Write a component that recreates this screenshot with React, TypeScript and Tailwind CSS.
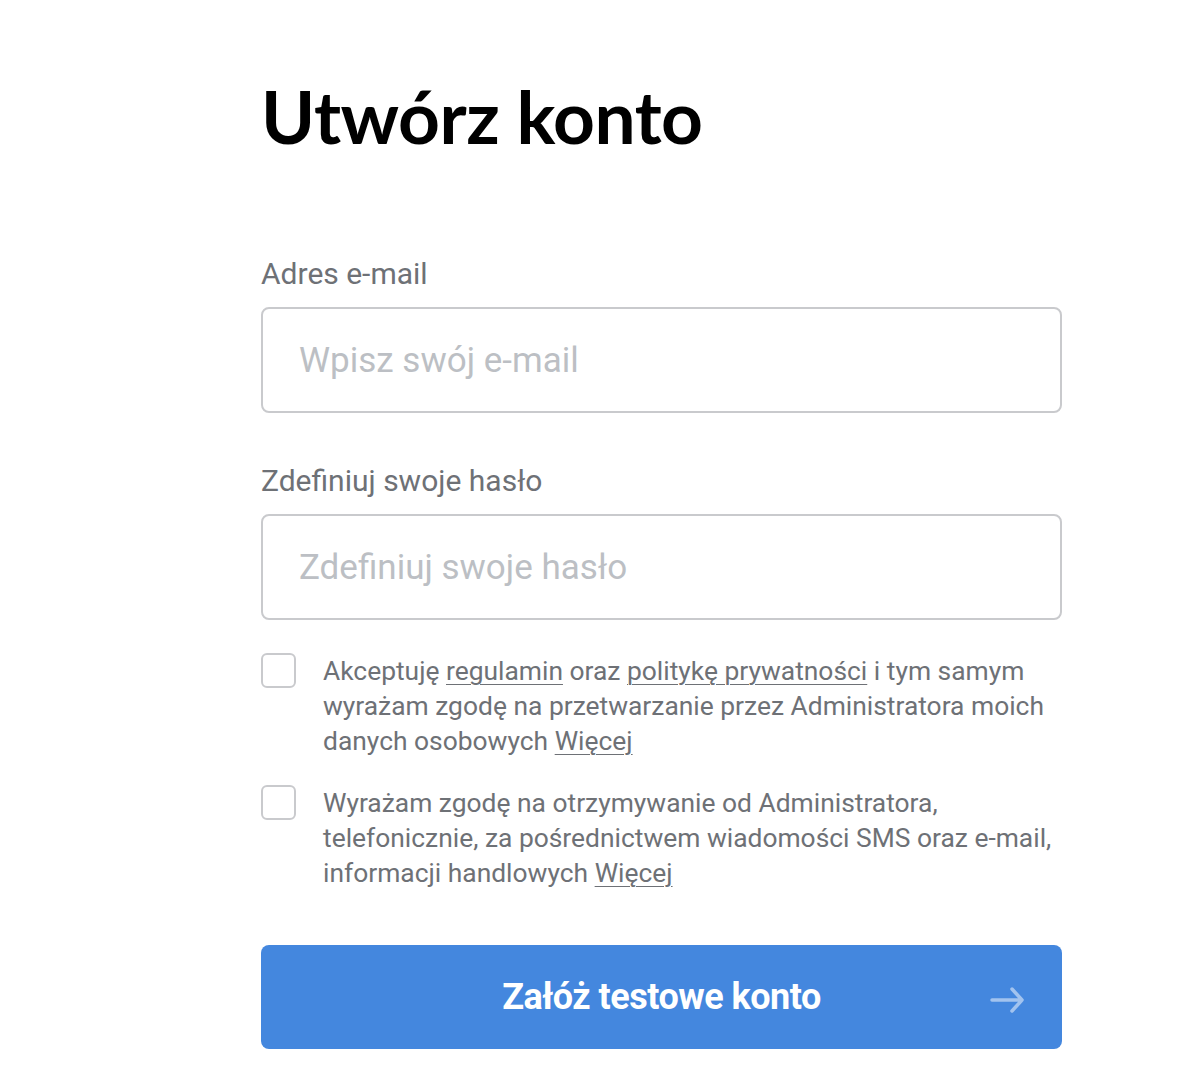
import React, { useState } from 'react';

export default function App() {
    const [email, setEmail] = useState('');
    const [password, setPassword] = useState('');
    const [terms, setTerms] = useState(false);
    const [marketing, setMarketing] = useState(false);

    return (
        <div className="min-h-screen bg-white pl-[261px]" style={{ fontFamily: 'Roboto, "Liberation Sans", sans-serif' }}>
            <div className="w-[801px] pt-[71px]">
                <h1 className="text-[73px] leading-[90px] font-bold text-black tracking-[-0.5px]" style={{ fontFamily: 'Lato, "Open Sans", sans-serif' }}>
                    Utwórz konto
                </h1>

                <form className="mt-[95px]" onSubmit={e => e.preventDefault()}>
                    <label className="block text-[30px] leading-[36px] text-[#6e7176]">Adres e-mail</label>
                    <input
                        type="email"
                        value={email}
                        onChange={e => setEmail(e.target.value)}
                        placeholder="Wpisz swój e-mail"
                        className="mt-[15px] w-full h-[106px] px-[36px] text-[35px] text-[#333] placeholder:text-[#bcbfc4] border-2 border-[#c9cacd] rounded-[8px] outline-none"
                    />

                    <label className="block mt-[50px] text-[30px] leading-[36px] text-[#6e7176]">Zdefiniuj swoje hasło</label>
                    <input
                        type="password"
                        value={password}
                        onChange={e => setPassword(e.target.value)}
                        placeholder="Zdefiniuj swoje hasło"
                        className="mt-[15px] w-full h-[106px] px-[36px] text-[35px] text-[#333] placeholder:text-[#bcbfc4] border-2 border-[#c9cacd] rounded-[8px] outline-none"
                    />

                    <div className="mt-[33px] flex gap-[27px]">
                        <button
                            type="button"
                            onClick={() => setTerms(!terms)}
                            className={`shrink-0 w-[35px] h-[35px] rounded-[6px] border-2 ${terms ? 'border-[#4487de] bg-[#4487de]' : 'border-[#c9cacd] bg-white'}`}
                        />
                        <p className="text-[26.4px] leading-[35px] text-[#6e7176] mt-[1px]">
                            Akceptuję <a className="underline underline-offset-[4px] decoration-1">regulamin</a> oraz{' '}
                            <a className="underline underline-offset-[4px] decoration-1">politykę prywatności</a> i tym samym wyrażam zgodę na przetwarzanie przez Administratora moich danych osobowych{' '}
                            <a className="underline underline-offset-[4px] decoration-1">Więcej</a>
                        </p>
                    </div>

                    <div className="mt-[26px] flex gap-[27px]">
                        <button
                            type="button"
                            onClick={() => setMarketing(!marketing)}
                            className={`shrink-0 w-[35px] h-[35px] rounded-[6px] border-2 ${marketing ? 'border-[#4487de] bg-[#4487de]' : 'border-[#c9cacd] bg-white'}`}
                        />
                        <p className="text-[26.4px] leading-[35px] text-[#6e7176] mt-[1px]">
                            Wyrażam zgodę na otrzymywanie od Administratora, telefonicznie, za pośrednictwem wiadomości SMS oraz e-mail, informacji handlowych{' '}
                            <a className="underline underline-offset-[4px] decoration-1">Więcej</a>
                        </p>
                    </div>

                    <button
                        type="submit"
                        className="mt-[54px] w-full h-[104px] rounded-[8px] bg-[#4487de] text-white relative flex items-center justify-center"
                    >
                        <span className="text-[36px] font-bold tracking-[-0.5px]">Załóż testowe konto</span>
                        <svg className="absolute right-[36px] top-[40px]" width="36" height="28" viewBox="0 0 36 28" fill="none">
                            <path d="M2 15h30M22 4l10 11-10 11" stroke="rgba(255,255,255,0.5)" strokeWidth="3.5" strokeLinecap="round" strokeLinejoin="round" />
                        </svg>
                    </button>
                </form>
            </div>
        </div>
    );
}
